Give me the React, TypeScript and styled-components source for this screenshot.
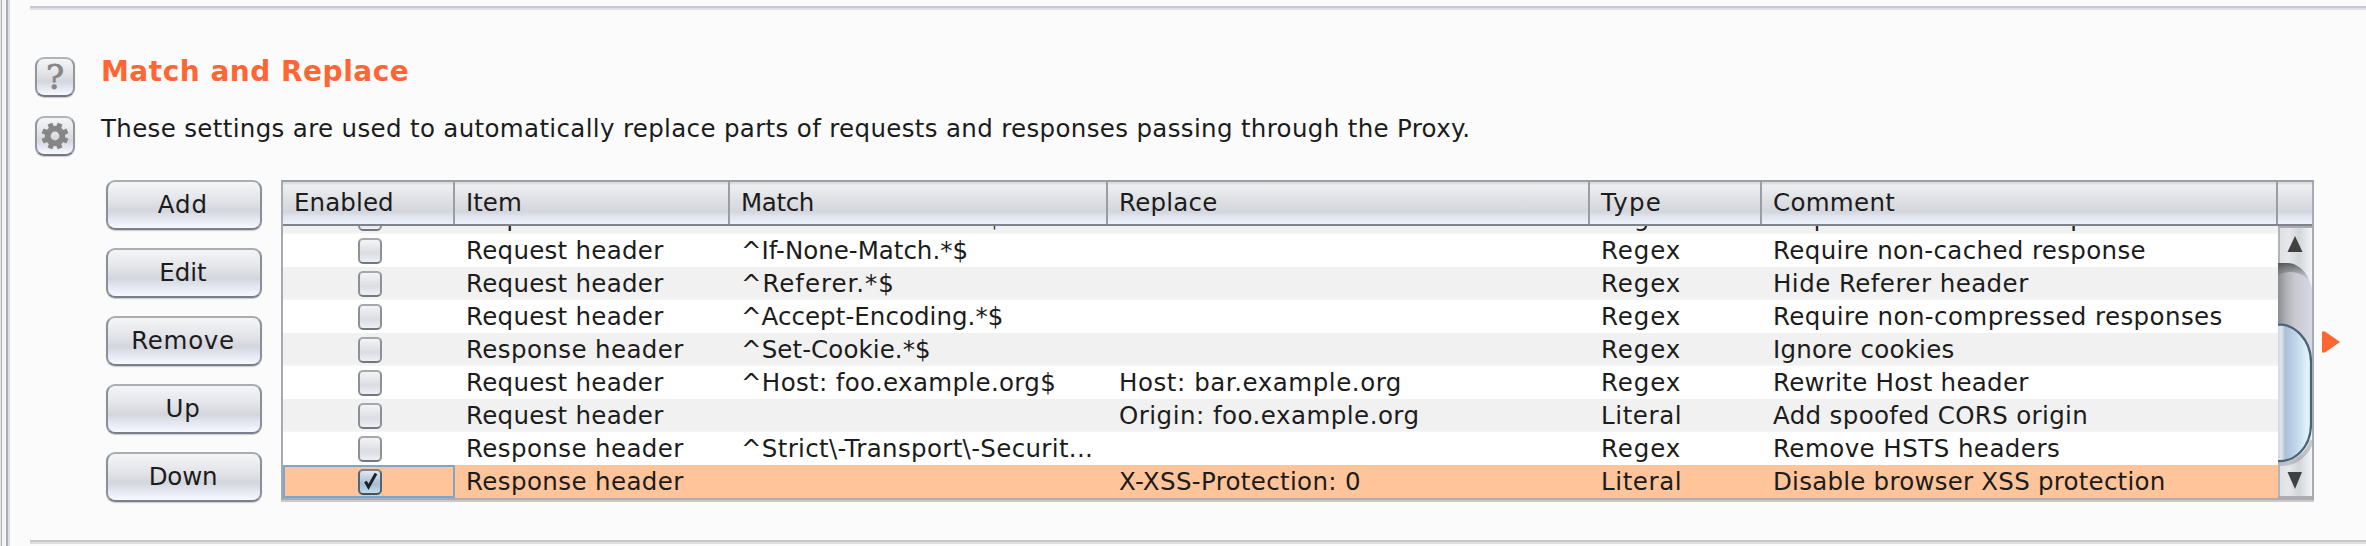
import React from 'react';
import styled, { createGlobalStyle } from 'styled-components';

const GlobalStyle = createGlobalStyle`
  body {
    margin: 0;
    background: #fbfbfb;
    color: #1c1c1c;
    font-family: 'DejaVu Sans', Verdana, sans-serif;
    font-size: 24.5px;
    overflow: hidden;
  }
`;

const metal = 'linear-gradient(#f4f5f6 0%, #e4e5e9 38%, #d4d6dd 62%, #e6e9f2 82%, #f6f9ff 100%)';

const Page = styled.div`
  display: flex;
  width: 2366px;
  height: 546px;
  overflow: hidden;
`;

const SplitEdge = styled.div`
  box-sizing: border-box;
  flex: none;
  width: 10px;
  border-right: 2px solid #dcdde2;
  background: linear-gradient(90deg, #e4e4e4 0 1px, #b2b2b4 1px 2px, #f4f4f6 2px 6px, #a8adb9 6px 8px);
`;

const Content = styled.main`
  flex: 1;
  display: flex;
  flex-direction: column;
  padding-top: 6px;
`;

const Rule = styled.div`
  box-sizing: border-box;
  flex: none;
  height: 4px;
  margin-left: 20px;
  border-top: 2px solid #c5c8cd;
  background: #dfe0e3;
`;

const Intro = styled.header`
  box-sizing: border-box;
  display: flex;
  height: 170px;
  padding-left: 25px;
`;

const IconColumn = styled.div`
  display: flex;
  flex-direction: column;
  gap: 19px;
  padding-top: 47px;
`;

const IconButton = styled.button`
  box-sizing: border-box;
  display: flex;
  align-items: center;
  justify-content: center;
  width: 40px;
  height: 40px;
  padding: 0;
  border: 2px solid #92969d;
  border-top-color: #b2b4b9;
  border-bottom-color: #74777f;
  border-radius: 9px;
  background: ${metal};
  box-shadow: 0 1px 1px #c9cace;
  color: #868686;
  font: 34px/34px 'DejaVu Serif', serif;
  -webkit-text-stroke: 0.8px #868686;
`;

const Heading = styled.div`
  padding: 45px 0 0 26px;
`;

const Title = styled.h1`
  margin: 0;
  color: #ff6633;
  font-size: 28px;
  line-height: 34px;
  letter-spacing: 0.5px;
`;

const Description = styled.p`
  margin: 23px 0 0;
  line-height: 33px;
  letter-spacing: 0.34px;
  white-space: nowrap;
`;

const Workspace = styled.section`
  display: flex;
  align-items: flex-start;
  height: 360px;
  padding-left: 96px;
`;

const Actions = styled.div`
  display: flex;
  flex-direction: column;
  gap: 18px;
  width: 156px;
  margin-right: 19px;
`;

const ActionButton = styled.button<{ $track: number }>`
  box-sizing: border-box;
  height: 50px;
  padding: 0 2px 0 0;
  border: 2px solid #8b8f96;
  border-top-color: #aaadb2;
  border-bottom-color: #7c7f87;
  border-radius: 9px;
  background: ${metal};
  box-shadow: 0 1px 1px #c9cace;
  color: #1c1c1c;
  font: 24.5px/44px 'DejaVu Sans', sans-serif;
  letter-spacing: ${p => p.$track}px;
`;

const TableFrame = styled.div`
  box-sizing: border-box;
  width: 2033px;
  height: 320px;
  border: 2px solid #a5a9b2;
  border-top-color: #9a9fa8;
  border-bottom-color: #b3aaa9;
  box-shadow: 0 2px #c8c9cf;
  overflow: hidden;
`;

const columns = '172px 275px 378px 482px 172px 516px';

const HeaderRow = styled.div`
  box-sizing: border-box;
  display: grid;
  grid-template-columns: ${columns} 1fr;
  height: 44px;
  border-bottom: 2px solid #7f838b;
  background: linear-gradient(#d8dade 0, #dfe0e3 2px, #eff0f2 3px, #dfe0e4 18px, #d3d6dc 30px, #e0e4ef 34px, #edf1fb 42px);
`;

const HeaderCell = styled.div<{ $track?: number }>`
  box-sizing: border-box;
  padding-left: 11px;
  border-right: 2px solid #9a9da4;
  line-height: 41px;
  letter-spacing: ${p => p.$track ?? 0}px;
  white-space: nowrap;
  &:last-child {
    border-right: 0;
  }
`;

const Viewport = styled.div`
  display: flex;
  height: 272px;
`;

const Rows = styled.div`
  box-sizing: border-box;
  flex: none;
  display: flex;
  flex-direction: column;
  justify-content: flex-end;
  width: 1995px;
  height: 272px;
  overflow: hidden;
`;

const Row = styled.div<{ $tone: string }>`
  flex: none;
  display: grid;
  grid-template-columns: ${columns};
  height: 33px;
  background: ${p => p.$tone};
`;

const Cell = styled.div<{ $track?: number }>`
  height: 33px;
  padding-left: 11px;
  line-height: 34px;
  letter-spacing: ${p => p.$track ?? 0}px;
  white-space: nowrap;
`;

const ToggleCell = styled.div<{ $focused: boolean }>`
  box-sizing: border-box;
  display: flex;
  align-items: center;
  justify-content: center;
  padding-top: 1px;
  box-shadow: ${p => (p.$focused ? 'inset 0 0 0 2px #7fa5cb' : 'none')};
`;

const Box = styled.span<{ $checked: boolean }>`
  box-sizing: border-box;
  display: flex;
  width: 24px;
  height: 26px;
  margin-left: 2px;
  border: 2px solid ${p => (p.$checked ? '#4e6478' : '#8d9096')};
  border-top-color: ${p => (p.$checked ? '#718599' : '#a6a8ad')};
  border-bottom-color: ${p => (p.$checked ? '#3e5264' : '#74777e')};
  border-radius: 5px;
  background: ${p =>
    p.$checked
      ? 'linear-gradient(#dfe9f1, #a6bdd3 60%, #c4dcec)'
      : 'linear-gradient(#f4f4f6, #dcdde2 60%, #edf0f8)'};
  overflow: visible;
`;

const Check = styled.svg`
  flex: none;
  width: 20px;
  height: 22px;
`;

const ScrollBar = styled.svg`
  flex: none;
  width: 34px;
  height: 272px;
`;

const ExpandMarker = styled.svg`
  flex: none;
  width: 18px;
  height: 22px;
  margin: 151px 0 0 8px;
`;

type Text = [string, number?];
type Rule = { item: Text; match: Text; replace: Text; type: Text; comment: Text; on?: boolean };

const request: Text = ['Request header', 0.28];
const response: Text = ['Response header', 0.4];
const regex: Text = ['Regex', 0.9];
const literal: Text = ['Literal', 0.6];
const none: Text = [''];

const rules: Rule[] = [
  { item: request, match: ['^If-Modified-Since.*$', 0.1], replace: none, type: regex, comment: ['Require non-cached response', 0.36] },
  { item: request, match: ['^If-None-Match.*$', 0], replace: none, type: regex, comment: ['Require non-cached response', 0.36] },
  { item: request, match: ['^Referer.*$', 0.95], replace: none, type: regex, comment: ['Hide Referer header', 0.45] },
  { item: request, match: ['^Accept-Encoding.*$', 0.05], replace: none, type: regex, comment: ['Require non-compressed responses', 0.41] },
  { item: response, match: ['^Set-Cookie.*$', 0.1], replace: none, type: regex, comment: ['Ignore cookies', 0.25] },
  { item: request, match: ['^Host: foo.example.org$', 0.34], replace: ['Host: bar.example.org', 0.55], type: regex, comment: ['Rewrite Host header', 0.28] },
  { item: request, match: none, replace: ['Origin: foo.example.org', 0.48], type: literal, comment: ['Add spoofed CORS origin', 0.35] },
  { item: response, match: ['^Strict\\-Transport\\-Securit...', 0.34], replace: none, type: regex, comment: ['Remove HSTS headers', 0.45] },
  { item: response, match: none, replace: ['X-XSS-Protection: 0', 0.34], type: literal, comment: ['Disable browser XSS protection', 0.24], on: true },
];

const headers: Text[] = [['Enabled', 0.1], ['Item', 0], ['Match', -0.35], ['Replace', 0.25], ['Type', 1.2], ['Comment', 0.3], ['']];
const actions: [string, number][] = [['Add', 0.95], ['Edit', 0], ['Remove', 0.68], ['Up', 0.8], ['Down', -0.2]];

const rowTone = (i: number, on?: boolean) => (on ? '#ffc499' : i % 2 ? '#ffffff' : 'linear-gradient(#f1f1f1 31px, #f7f7f7 33px)');

function GearIcon() {
  return (
    <svg width="28" height="28" viewBox="-14 -14 28 28">
      <circle r="7.3" fill="none" stroke="#868686" strokeWidth="5.8" />
      {[22.5, 67.5, 112.5, 157.5, 202.5, 247.5, 292.5, 337.5].map(a => (
        <rect key={a} x="-2.6" y="-13.4" width="5.2" height="5" fill="#868686" transform={`rotate(${a})`} />
      ))}
    </svg>
  );
}

function VerticalScroll() {
  return (
    <ScrollBar viewBox="0 0 34 272">
      <defs>
        <linearGradient id="track">
          <stop offset="0" stopColor="#898c91" />
          <stop offset="0.22" stopColor="#adafb3" />
          <stop offset="0.5" stopColor="#c9c9ce" />
          <stop offset="1" stopColor="#d7dae4" />
        </linearGradient>
        <linearGradient id="cap">
          <stop offset="0" stopColor="#dddfe2" />
          <stop offset="0.3" stopColor="#e6e7ea" />
          <stop offset="0.62" stopColor="#d2d7db" />
          <stop offset="1" stopColor="#f3f6f7" />
        </linearGradient>
        <linearGradient id="thumb">
          <stop offset="0" stopColor="#c3cbd8" />
          <stop offset="0.14" stopColor="#dfe6ee" />
          <stop offset="0.2" stopColor="#ced9e5" />
          <stop offset="0.25" stopColor="#abc0d8" />
          <stop offset="0.55" stopColor="#bfd4e8" />
          <stop offset="0.9" stopColor="#def5f9" />
        </linearGradient>
        <linearGradient id="shade" x1="0" y1="0" x2="0" y2="1">
          <stop offset="0" stopColor="#3e4042" stopOpacity="0.85" />
          <stop offset="1" stopColor="#77797d" stopOpacity="0" />
        </linearGradient>
      </defs>
      <rect width="34" height="272" fill="url(#track)" />
      <path d="M0 36C16 34 27 43 32 55C24 47 13 43 0 49Z" fill="url(#shade)" />
      <path d="M0 0H34V62C31 50 23 37 10 37H0Z" fill="url(#cap)" />
      <path d="M0 234C16 235 33 224 34 198V272H0Z" fill="url(#cap)" />
      <path d="M0 238C18 239 30 228 34 214" fill="none" stroke="#777b80" strokeOpacity="0.35" strokeWidth="4" />
      <path d="M-2 99C16 96 33 114 33 136V198C33 222 16 237 -2 235Z" fill="url(#thumb)" stroke="#4c6278" strokeWidth="2.2" />
      <path d="M1 0V37M1 237V272" stroke="#b1b4b9" strokeWidth="2" />
      <path d="M0 1H34" stroke="#a9abae" strokeWidth="2" />
      <path d="M0 271H34" stroke="#aaadb3" strokeWidth="2" />
      <path d="M17 10L24.5 26H9.5Z" fill="#414141" />
      <path d="M9.5 246H24L17 263Z" fill="#414141" />
    </ScrollBar>
  );
}

export default function App() {
  return (
    <Page>
      <GlobalStyle />
      <SplitEdge />
      <Content>
        <Rule />
        <Intro>
          <IconColumn>
            <IconButton>?</IconButton>
            <IconButton>
              <GearIcon />
            </IconButton>
          </IconColumn>
          <Heading>
            <Title>Match and Replace</Title>
            <Description>
              These settings are used to automatically replace parts of requests and responses passing through the Proxy.
            </Description>
          </Heading>
        </Intro>
        <Workspace>
          <Actions>
            {actions.map(([label, track]) => (
              <ActionButton key={label} $track={track}>{label}</ActionButton>
            ))}
          </Actions>
          <TableFrame>
            <HeaderRow>
              {headers.map(([label, track]) => (
                <HeaderCell key={label} $track={track}>{label}</HeaderCell>
              ))}
            </HeaderRow>
            <Viewport>
              <Rows>
                {rules.map((rule, i) => (
                  <Row key={i} $tone={rowTone(i, rule.on)}>
                    <ToggleCell $focused={!!rule.on}>
                      <Box $checked={!!rule.on}>
                        {rule.on && (
                          <Check viewBox="0 0 20 22">
                            <path d="M5.5 10.5L8.5 16L16 2.5" fill="none" stroke="#1d2329" strokeWidth="3" />
                          </Check>
                        )}
                      </Box>
                    </ToggleCell>
                    {[rule.item, rule.match, rule.replace, rule.type, rule.comment].map(([text, track], c) => (
                      <Cell key={c} $track={track}>{text}</Cell>
                    ))}
                  </Row>
                ))}
              </Rows>
              <VerticalScroll />
            </Viewport>
          </TableFrame>
          <ExpandMarker viewBox="0 0 18 22">
            <path d="M0 0.5L3 0.5L18 11L3 21.5H0Z" fill="#ff6633" />
          </ExpandMarker>
        </Workspace>
        <Rule />
      </Content>
    </Page>
  );
}
